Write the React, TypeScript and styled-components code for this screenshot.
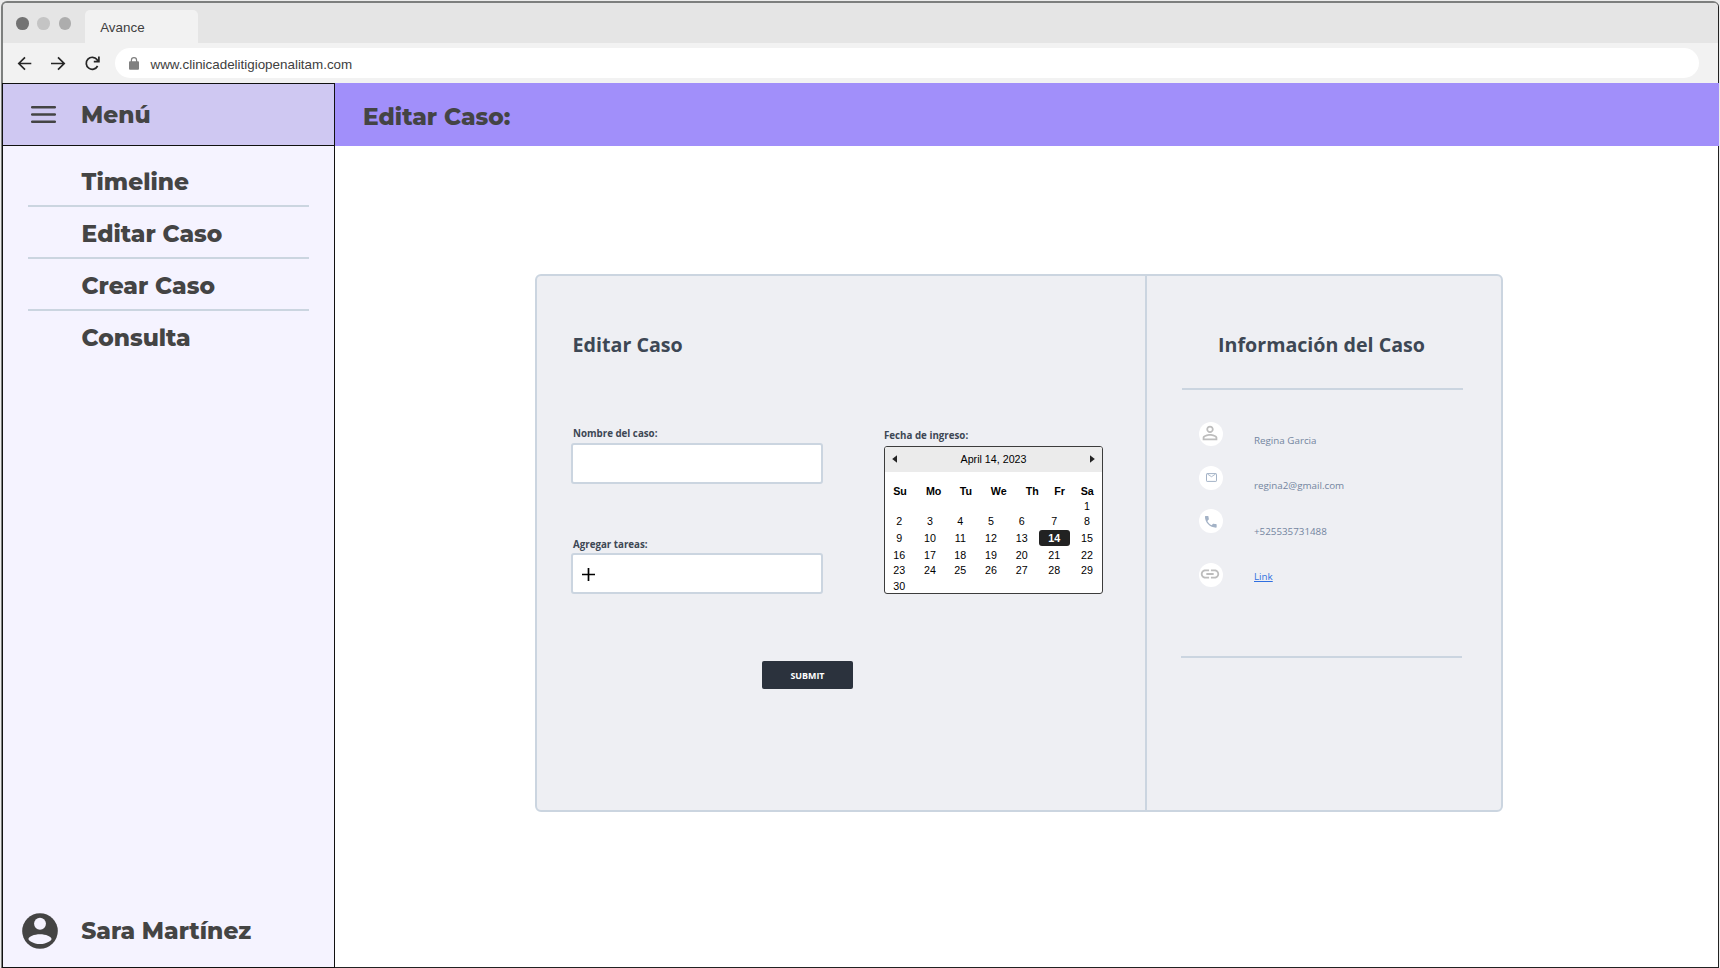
import React from 'react';
import styled, { createGlobalStyle } from 'styled-components';
import { MdPhone, MdLink, MdPersonOutline } from 'react-icons/md';

const GlobalStyle = createGlobalStyle`
  * { box-sizing: border-box; }
  body { margin: 0; background: #ececec; }
  h1, h2, p { margin: 0; }
  svg { display: block; flex: none; }
`;

const sans = '"Liberation Sans", Arial, sans-serif';
const open = '"Open Sans", "Noto Sans", sans-serif';
const display = 'Montserrat, Inter, sans-serif';
const line = '#cbd5e0';
const ink = '#444444';

/* Browser window */

const Window = styled.div`
  display: flex;
  flex-direction: column;
  width: 1718px;
  height: 967px;
  margin: 1px 0 0 1px;
  border: solid #7d7f7e;
  border-width: 2px 1px 1px 2px;
  border-right-color: #222;
  border-bottom-color: #222;
  border-radius: 6px 6px 0 0;
  background: #fff;
`;

const TabStrip = styled.div`
  display: flex;
  height: 40px;
  padding: 7px 0 0 13px;
  border-radius: 4px 4px 0 0;
  background: #e5e5e5;
`;

const Lights = styled.div`
  display: flex;
  gap: 8.7px;
  padding-top: 7px;
`;

const Light = styled.span<{ $color: string }>`
  width: 12.6px;
  height: 12.6px;
  border-radius: 50%;
  background: ${(p) => p.$color};
`;

const Tab = styled.div`
  width: 113px;
  margin-left: 14px;
  padding-left: 15px;
  border-radius: 5px 5px 0 0;
  background: #f2f2f2;
  color: #404040;
  font: 13.4px/35px ${sans};
`;

const Toolbar = styled.div`
  display: flex;
  align-items: center;
  height: 40px;
  padding: 0 19px 0 14px;
  background: #f2f2f2;
`;

const NavIcon = styled.svg`
  width: 16px;
  height: 16px;
  margin-right: 17.5px;
  fill: none;
  stroke: #262626;
  stroke-width: 1.7;
`;

const AddressBar = styled.div`
  display: flex;
  flex: 1;
  align-items: center;
  gap: 12px;
  height: 30px;
  margin-left: -3px;
  padding-left: 14px;
  border-radius: 15px;
  background: #fff;
  color: #404040;
  font: 13.4px/30px ${sans};
`;

const Url = styled.span`
  padding-top: 3px;
`;

/* Page */

const Page = styled.div`
  display: flex;
  flex: 1;
  min-height: 0;
`;

const Sidebar = styled.aside`
  display: flex;
  flex-direction: column;
  width: 333px;
  margin: 0 0 -1px -1px;
  border: 1px solid #111;
  background: #f5f3ff;
  color: ${ink};
  font: 800 23.3px/30px ${display};
`;

const MenuHeader = styled.div`
  display: flex;
  align-items: center;
  gap: 25px;
  height: 62px;
  padding-left: 28px;
  border-bottom: 1px solid #111;
  background: #cfc8f2;
`;

const MenuGlyph = styled.svg`
  width: 25px;
  height: 17px;
  stroke: ${ink};
  stroke-width: 2.5;
  stroke-linecap: round;
`;

const Nav = styled.nav`
  flex: 1;
  padding: 9px 25px 0 25px;
`;

const NavItem = styled.div`
  display: flex;
  align-items: center;
  height: 52.1px;
  padding: 3px 0 0 53.6px;
  border-bottom: 2px solid ${line};

  &:last-child {
    border-bottom-color: transparent;
  }
`;

const User = styled.div`
  display: flex;
  align-items: center;
  gap: 23.2px;
  padding: 0 0 18px 19px;
`;

const Main = styled.main`
  flex: 1;
`;

const PageHeader = styled.header`
  height: 63px;
  margin-right: -1px;
  padding: 4px 0 0 28px;
  background: #a18ffa;
`;

const PageTitle = styled.h1`
  color: ${ink};
  font: 800 23.3px/59px ${display};
`;

/* Card */

const Card = styled.section`
  display: flex;
  width: 968px;
  height: 538px;
  margin: 128px 0 0 200px;
  border: 2px solid ${line};
  border-radius: 6px;
  background: #eeeff3;
  color: #3d4754;
  font-family: ${open};
`;

const FormPane = styled.div`
  width: 610px;
  padding: 55px 0 0 34px;
  border-right: 2px solid ${line};
`;

const CardTitle = styled.h2`
  font: 700 19.65px/28px ${open};
`;

const FormTitle = styled(CardTitle)`
  margin: 0 0 68px 1.6px;
`;

const Fields = styled.div`
  display: flex;
  gap: 61px;
`;

const TextFields = styled.div`
  display: flex;
  flex-direction: column;
  gap: 54px;
`;

const Field = styled.label<{ $gap: number }>`
  display: flex;
  flex-direction: column;
  gap: ${(p) => p.$gap}px;
`;

const Label = styled.span<{ $indent?: number }>`
  padding-left: ${(p) => p.$indent ?? 0}px;
  font: 700 9.75px/14px ${open};
`;

const Box = styled.div`
  display: flex;
  align-items: center;
  width: 252px;
  height: 41px;
  padding-left: 9px;
  border: 2px solid ${line};
  border-radius: 3px;
  background: #fff;
`;

const PlusGlyph = styled.svg`
  width: 13px;
  height: 13px;
  margin-top: 1px;
  stroke: #000;
  stroke-width: 1.7;
`;

const CalendarField = styled(Field)`
  padding-top: 2px;
`;

const Calendar = styled.div`
  width: 219px;
  height: 148px;
  border: 1px solid #3c3c3c;
  border-radius: 3px;
  background: #fff;
  color: #000;
  font: 10.7px/12px ${sans};
  overflow: hidden;
`;

const Month = styled.div`
  display: flex;
  align-items: center;
  justify-content: space-between;
  height: 25px;
  padding: 0 7px 1px;
  background: #ebebeb;
`;

const Arrow = styled.svg`
  width: 5px;
  height: 8px;
  fill: #222;
`;

const Weekdays = styled.div`
  display: grid;
  grid-template-columns: 30px 37.4px 27.2px 38.2px 29px 25.8px 29.4px;
  align-items: center;
  height: 15px;
  margin: 11px 0 1px;
  font-weight: 700;
  text-align: center;
`;

const Days = styled.div`
  display: grid;
  grid-template-columns: 28.6px 32.8px 27.8px 33.6px 27.8px 37.4px 28px;
  grid-template-rows: 14.8px 15.2px 18.8px 15.2px 14.8px 17px;
  place-items: center;
`;

const Day = styled.span<{ $first?: boolean; $selected?: boolean }>`
  ${(p) => p.$first && 'grid-column-start: 7;'}
  ${(p) =>
    p.$selected &&
    `
    width: 30.5px;
    border-radius: 3px;
    background: #222;
    color: #fff;
    font-weight: 700;
    line-height: 16px;
    text-align: center;
  `}
`;

const Submit = styled.button`
  display: block;
  width: 91px;
  height: 28px;
  margin: 67px 0 0 191px;
  padding: 1px 0 0;
  border: 0;
  border-radius: 2px;
  background: #2b323d;
  color: #fff;
  font: 700 8.9px/27px ${open};
`;

const InfoPane = styled.div`
  width: 316px;
  padding: 55px 0 0 35px;
`;

const InfoTitle = styled(CardTitle)`
  width: 279px;
  text-align: center;
`;

const Rule = styled.div<{ $top: number; $shift?: number }>`
  width: 281px;
  height: 2px;
  margin: ${(p) => p.$top}px 0 0 ${(p) => p.$shift ?? 0}px;
  background: ${line};
`;

const Contacts = styled.div`
  padding: 28.4px 0 0 17px;
`;

const Contact = styled.div`
  display: flex;
  align-items: center;
  gap: 31px;
  height: 45.4px;
  color: #7385a0;
  font: 9.8px/14px ${open};
`;

const Badge = styled.span<{ $lift: number; $color: string }>`
  display: flex;
  align-items: center;
  justify-content: center;
  width: 24px;
  height: 24px;
  margin-bottom: ${(p) => p.$lift * 2}px;
  border-radius: 50%;
  background: #fff;
  color: ${(p) => p.$color};
`;

const NudgedIcon = styled.span`
  padding: 0 2px 2px 0;
`;

const ContactLink = styled.a`
  color: #2f6fe0;
  text-decoration: underline;
  text-underline-offset: 1px;
`;

const LockIcon = () => (
  <svg width="10" height="13" viewBox="0 0 10 13">
    <path d="M2.4 6V3.3a2.6 2.6 0 0 1 5.2 0V6" fill="none" stroke="#808080" strokeWidth="1.2" />
    <rect y="4.2" width="10" height="8.6" rx="1" fill="#808080" />
  </svg>
);

const AvatarIcon = () => (
  <svg width="36" height="36" viewBox="2 2 20 20">
    <circle cx="12" cy="12" r="9.9" fill={ink} />
    <circle cx="12" cy="8" r="3.3" fill="#f5f3ff" />
    <path
      d="M12 13.8c3.2 0 6.4 1.3 6.4 2.6 0 .8-2.6 2.8-6.4 2.8s-6.4-2-6.4-2.8c0-1.3 3.2-2.6 6.4-2.6z"
      fill="#f5f3ff"
    />
  </svg>
);

const MailIcon = () => (
  <svg width="11" height="9" viewBox="0 0 11 9" fill="none" stroke="currentColor">
    <rect x=".5" y=".6" width="10" height="7.8" rx=".6" strokeWidth="1" />
    <path d="M1.4 1 5.5 3.7 9.6 1" strokeWidth=".9" />
  </svg>
);

const sections = ['Timeline', 'Editar Caso', 'Crear Caso', 'Consulta'];
const weekdays = ['Su', 'Mo', 'Tu', 'We', 'Th', 'Fr', 'Sa'];
const days = Array.from({ length: 30 }, (_, i) => i + 1);

export default function App() {
  return (
    <>
      <GlobalStyle />
      <Window>
        <TabStrip>
          <Lights>
            <Light $color="#737373" />
            <Light $color="#c4c4c4" />
            <Light $color="#adadad" />
          </Lights>
          <Tab>Avance</Tab>
        </TabStrip>
        <Toolbar>
          <NavIcon viewBox="0 0 16 16">
            <path d="M14.3 8.5H2M8 2.3 1.8 8.5 8 14.7" />
          </NavIcon>
          <NavIcon viewBox="0 0 16 16">
            <path d="M0 8.5h12.9M7 2.3l6.2 6.2L7 14.7" />
          </NavIcon>
          <NavIcon viewBox="0 0 16 16">
            <path d="M13.6 11A6 6 0 1 1 13 4.6L14.4 6.1M14.9 1.6v5H9.8" />
          </NavIcon>
          <AddressBar>
            <LockIcon />
            <Url>www.clinicadelitigiopenalitam.com</Url>
          </AddressBar>
        </Toolbar>
        <Page>
          <Sidebar>
            <MenuHeader>
              <MenuGlyph viewBox="0 0 25 17">
                <path d="M1.2 1.3h22.6M1.2 8.5h22.6M1.2 15.7h22.6" />
              </MenuGlyph>
              Menú
            </MenuHeader>
            <Nav>
              {sections.map((name) => (
                <NavItem key={name}>{name}</NavItem>
              ))}
            </Nav>
            <User>
              <AvatarIcon />
              Sara Martínez
            </User>
          </Sidebar>
          <Main>
            <PageHeader>
              <PageTitle>Editar Caso:</PageTitle>
            </PageHeader>
            <Card>
              <FormPane>
                <FormTitle>Editar Caso</FormTitle>
                <Fields>
                  <TextFields>
                    <Field $gap={2}>
                      <Label $indent={2}>Nombre del caso:</Label>
                      <Box />
                    </Field>
                    <Field $gap={1}>
                      <Label $indent={2}>Agregar tareas:</Label>
                      <Box>
                        <PlusGlyph viewBox="0 0 13 13">
                          <path d="M6.5 0v13M0 6.5h13" />
                        </PlusGlyph>
                      </Box>
                    </Field>
                  </TextFields>
                  <CalendarField as="div" $gap={3}>
                    <Label>Fecha de ingreso:</Label>
                    <Calendar>
                      <Month>
                        <Arrow viewBox="0 0 5 8">
                          <path d="M5 .3v7.4L.2 4z" />
                        </Arrow>
                        April 14, 2023
                        <Arrow viewBox="0 0 5 8">
                          <path d="M0 .3v7.4L4.8 4z" />
                        </Arrow>
                      </Month>
                      <Weekdays>
                        {weekdays.map((name) => (
                          <span key={name}>{name}</span>
                        ))}
                      </Weekdays>
                      <Days>
                        {days.map((day) => (
                          <Day key={day} $first={day === 1} $selected={day === 14}>
                            {day}
                          </Day>
                        ))}
                      </Days>
                    </Calendar>
                  </CalendarField>
                </Fields>
                <Submit>SUBMIT</Submit>
              </FormPane>
              <InfoPane>
                <InfoTitle>Información del Caso</InfoTitle>
                <Rule $top={29} />
                <Contacts>
                  <Contact>
                    <Badge $lift={6.7} $color="#bdbdbd">
                      <NudgedIcon>
                        <MdPersonOutline size={22} />
                      </NudgedIcon>
                    </Badge>
                    Regina Garcia
                  </Contact>
                  <Contact>
                    <Badge $lift={8.6} $color="#a3b2c6">
                      <MailIcon />
                    </Badge>
                    regina2@gmail.com
                  </Contact>
                  <Contact>
                    <Badge $lift={10.4} $color="#a3b2c6">
                      <MdPhone size={15.6} />
                    </Badge>
                    +525535731488
                  </Contact>
                  <Contact>
                    <Badge $lift={2.3} $color="#bdbdbd">
                      <NudgedIcon>
                        <MdLink size={22} />
                      </NudgedIcon>
                    </Badge>
                    <ContactLink>Link</ContactLink>
                  </Contact>
                </Contacts>
                <Rule $top={56} $shift={-1} />
              </InfoPane>
            </Card>
          </Main>
        </Page>
      </Window>
    </>
  );
}
